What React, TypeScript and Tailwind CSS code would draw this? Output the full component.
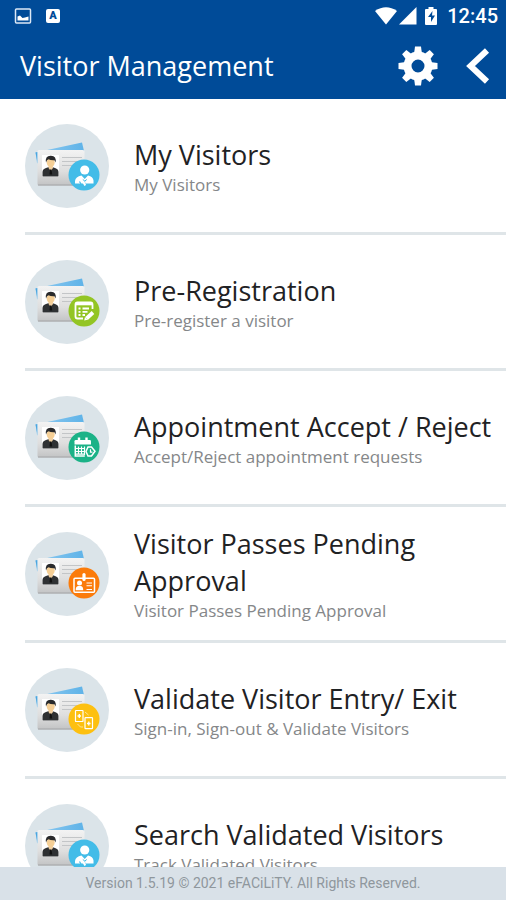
import type { ReactNode } from "react";

type BadgeKind = "visitor" | "form" | "calendar" | "pass" | "gate";

type MenuItem = {
  title: string;
  subtitle: string;
  href: string;
  badge: BadgeKind;
};

const items: MenuItem[] = [
  {
    title: "My Visitors",
    subtitle: "My Visitors",
    href: "#my-visitors",
    badge: "visitor",
  },
  {
    title: "Pre-Registration",
    subtitle: "Pre-register a visitor",
    href: "#pre-registration",
    badge: "form",
  },
  {
    title: "Appointment Accept / Reject",
    subtitle: "Accept/Reject appointment requests",
    href: "#appointments",
    badge: "calendar",
  },
  {
    title: "Visitor Passes Pending Approval",
    subtitle: "Visitor Passes Pending Approval",
    href: "#passes",
    badge: "pass",
  },
  {
    title: "Validate Visitor Entry/ Exit",
    subtitle: "Sign-in, Sign-out & Validate Visitors",
    href: "#validate",
    badge: "gate",
  },
  {
    title: "Search Validated Visitors",
    subtitle: "Track Validated Visitors",
    href: "#search",
    badge: "visitor",
  },
];

const badgeColor: Record<BadgeKind, string> = {
  visitor: "#43bce8",
  form: "#93c524",
  calendar: "#1bb287",
  pass: "#fb7b0a",
  gate: "#fdc010",
};

// Each glyph is drawn around 0,0, the centre of its badge
const badgeGlyph: Record<BadgeKind, ReactNode> = {
  visitor: (
    <g fill="#fff">
      <circle cx="0.7" cy="-5" r="4.600" />
      <path d="M-2.500 .5l3.200 3.500L4 .5q5 1 5.500 5V8.500H-9V6q.5-4.500 6.500-5.500z" />
      <path d="M-1.200 4.500l2 1.500 2-1.500M.7 6v3" fill="none" stroke="#43bce8" strokeWidth="1" />
      <path d="M-4.500 6.500l1.500 2.500" stroke="#43bce8" strokeWidth="1.200" />
      <path d="M-.8 6.500l2 4" stroke="#fff" strokeWidth="2" />
    </g>
  ),
  form: (
    <g fill="none" stroke="#fff" strokeWidth="1.800">
      <path d="M8.500-2v-4.500a2 2 0 0 0-2-2h-13a2 2 0 0 0-2 2v12a2 2 0 0 0 2 2H-1" />
      <path d="M-8.500-7h17" strokeWidth="2.600" />
      <path d="M-5.500-2.500h2M-1.500-2.500h6.500M-5.500 .8h2M-1.500 .8h5M-5.500 4h2M-1.500 4h2.500" />
      <path d="M2.500 7.500L9 1.500" strokeWidth="3.800" />
      <path d="M.2 9.500l.8-3.500 2.600 2.700z" fill="#fff" stroke="none" />
    </g>
  ),
  calendar: (
    <g fill="none" stroke="#fff" strokeWidth="1.500">
      <path d="M-9.500-2.500v-3.200q0-1.300 1.300-1.300H5.700Q7-7 7-5.700v3.200z" fill="#fff" stroke="none" />
      <path d="M-5-9.500v4M2.500-9.500v4" stroke="#fff" strokeWidth="2.400" />
      <path d="M-8.700-1.500V9h9.500" />
      <path d="M-5.500-.5v8M-2.500-.5v8M.5-.5V8M-8 1.500h9M-8 4.500h8M-8 7.200h8" strokeWidth="1.200" />
      <path d="M4 0h3.500l3.500 4.200L7.500 9H4L2 4.500z" />
      <path d="M6.500 2.200v3h2" strokeWidth="1.200" />
    </g>
  ),
  pass: (
    <g fill="none" stroke="#fff" strokeWidth="1.500">
      <rect x="-10" y="-4.800" width="20.500" height="14" rx="1" />
      <path d="M0-8.500v5" strokeWidth="3.200" strokeLinecap="round" />
      <circle cx="-4.500" cy="0" r="2.500" fill="#fff" stroke="none" />
      <path d="M-8.300 7.200q0-3.700 2.300-4.200h3Q-.8 3.500-.8 7.200z" fill="#fff" stroke="none" />
      <path d="M2.500 0h5.500M2.500 2.800h5.500M2.500 6.500h5.500" strokeWidth="1.100" />
    </g>
  ),
  gate: (
    <g fill="none" stroke="#fff" strokeWidth="1.200">
      <rect x="-8.500" y="-8.500" width="7.500" height="11" rx=".6" />
      <rect x="1" y="-1.300" width="7.500" height="11" rx=".6" />
      <path d="M-6.500-3h3.500M-4.700-5v4M3 4.500h3.500M4.800 2.500v4" strokeWidth="1.300" />
      <path d="M-6.500 5l3 3h2.500M1-7l3.500 3" strokeWidth=".8" opacity=".7" />
    </g>
  ),
};

function CardIcon({ badge }: { badge: BadgeKind }) {
  return (
    <svg
      viewBox="0 0 84 84"
      className="size-21 shrink-0"
      aria-hidden="true"
    >
      <defs>
        <linearGradient id={`card-${badge}`} x1="0" y1="0" x2="0" y2="1">
          <stop offset="0" stopColor="#f3f3f3" />
          <stop offset="0.6" stopColor="#dedede" />
          <stop offset="1" stopColor="#c2c3c4" />
        </linearGradient>
        <linearGradient id={`back-${badge}`} x1="0" y1="0" x2="1" y2="0">
          <stop offset="0" stopColor="#8fcaf0" />
          <stop offset="1" stopColor="#5fb3e8" />
        </linearGradient>
      </defs>
      <circle cx="42" cy="42" r="42" fill="#dbe4e9" />
      <path d="M10.500 28.500L57 18.500 59 27 14 40l-2-1z" fill={`url(#back-${badge})`} />
      <path d="M10.500 28.500l2 10.500V28z" fill="#4aa5df" />
      <rect x="12.500" y="26" width="47" height="35.500" rx="1.500" fill={`url(#card-${badge})`} />
      <path d="M13 61h43" stroke="#a3a6a8" strokeWidth="1.200" />
      <path d="M37 33.500h20M37 37.500h20M37 41.500h14" stroke="#c3c5c7" strokeWidth="1" />
      <rect x="17" y="31" width="17" height="22" fill="#fff" />
      <path d="M17.500 52.500v-4.500q0-3 3.500-4l3-1h3l3 1q3.500 1 3.500 4v4.500z" fill="#2f3133" />
      <path d="M23.500 41h4.500v3l-2.200 3-2.300-3z" fill="#f1d0a2" />
      <ellipse cx="25.700" cy="38.500" rx="4" ry="4.600" fill="#f5cf96" />
      <path d="M21 38.500q-1.200-6.500 4.500-6.800 6.300-.3 5 6.800l-1-2.200q-4 .2-6-1l-1.500 1z" fill="#292a2c" />
      <path d="M25 45.500h1.500l.7 5h-2.700z" fill="#111" />
      <circle cx="59" cy="51" r="15.500" fill={badgeColor[badge]} />
      <g transform="translate(59 51)">{badgeGlyph[badge]}</g>
    </svg>
  );
}

function StatusBar() {
  return (
    <div className="flex h-8 items-center justify-between pr-2 pl-3.5 text-white">
      <div className="flex items-center gap-3.5">
        <svg viewBox="0 0 17 16" className="h-4 w-4.5" aria-hidden="true">
          <rect x="1" y="1" width="15" height="14" rx="1" fill="none" stroke="#dce8f5" strokeWidth="1.500" />
          <path d="M3 12.500V8.500l2.500-1 2.500 2.500 2.500-.5L14 8.500v4z" fill="#fff" />
        </svg>
        <span className="flex h-3.5 w-3.5 items-center justify-center rounded-xs bg-white font-['Roboto',sans-serif] text-[11px] font-black text-[#004b98]">
          A
        </span>
      </div>
      <div className="flex items-center">
        <svg viewBox="0 0 22 18" className="h-4.5 w-5.5" aria-hidden="true">
          <path d="M0 4Q11-3.500 22 4L11 17.500z" fill="#fff" />
        </svg>
        <svg viewBox="0 0 18 18" className="ml-0.5 h-4.5 w-4.5" aria-hidden="true">
          <path d="M0 17.500L17.500 0v17.500z" fill="#fff" />
        </svg>
        <svg viewBox="0 0 12 18" className="ml-2 h-4.5 w-3" aria-hidden="true">
          <path d="M1 2h2.500V0h5v2H11q1 0 1 1v14q0 1-1 1H1q-1 0-1-1V3q0-1 1-1z" fill="#fff" />
          <path d="M7.500 4L3 10h3v5l4-6.500H7z" fill="#004b98" />
        </svg>
        <span className="ml-2.5 font-['Roboto',sans-serif] text-[20px] leading-8 font-medium">
          12:45
        </span>
      </div>
    </div>
  );
}

function GearIcon() {
  const teeth = [0, 45, 90, 135, 180, 225, 270, 315];

  return (
    <svg viewBox="-20 -20 40 40" className="size-10" aria-hidden="true">
      {teeth.map((angle) => (
        <path
          key={angle}
          d="M-4-12l1-7.500h6l1 7.500z"
          fill="#fff"
          transform={`rotate(${angle})`}
        />
      ))}
      <circle r="10.500" fill="none" stroke="#fff" strokeWidth="8" />
    </svg>
  );
}

export default function App() {
  return (
    <div className="flex h-screen flex-col bg-white font-['Open_Sans','Noto_Sans',sans-serif]">
      <header className="shrink-0 bg-[#004b98]">
        <StatusBar />
        <div className="flex items-center justify-between pr-4 pl-5 text-white">
          <h1 className="text-[27px] leading-[67px]">Visitor Management</h1>
          <div className="flex items-center gap-7">
            <button type="button" aria-label="Settings">
              <GearIcon />
            </button>
            <button type="button" aria-label="Back">
              <svg viewBox="0 0 24 36" className="h-9 w-6" aria-hidden="true">
                <path d="M21 2.500L4.500 18 21 33.500" fill="none" stroke="#fff" strokeWidth="6" />
              </svg>
            </button>
          </div>
        </div>
      </header>

      <main className="min-h-0 flex-1 overflow-y-auto [scrollbar-width:none]">
        <ul className="pl-[25px]">
          {items.map((item) => (
            <li key={item.title} className="border-b-3 border-[#dfe5e8]">
              <a
                href={item.href}
                className="flex min-h-[133px] items-center gap-[25px]"
              >
                <CardIcon badge={item.badge} />
                <div className="min-w-0 flex-1">
                  <h2 className="text-[27px] leading-[37px] text-[#1f2224]">
                    {item.title}
                  </h2>
                  <p className="text-[17px] leading-[23px] text-[#858789]">
                    {item.subtitle}
                  </p>
                </div>
              </a>
            </li>
          ))}
        </ul>
      </main>

      <footer className="shrink-0 bg-[#d9e1e8] text-center font-['Roboto',sans-serif] text-[14px] leading-[33px] text-[#8f979d]">
        Version 1.5.19 © 2021 eFACiLiTY. All Rights Reserved.
      </footer>
    </div>
  );
}
